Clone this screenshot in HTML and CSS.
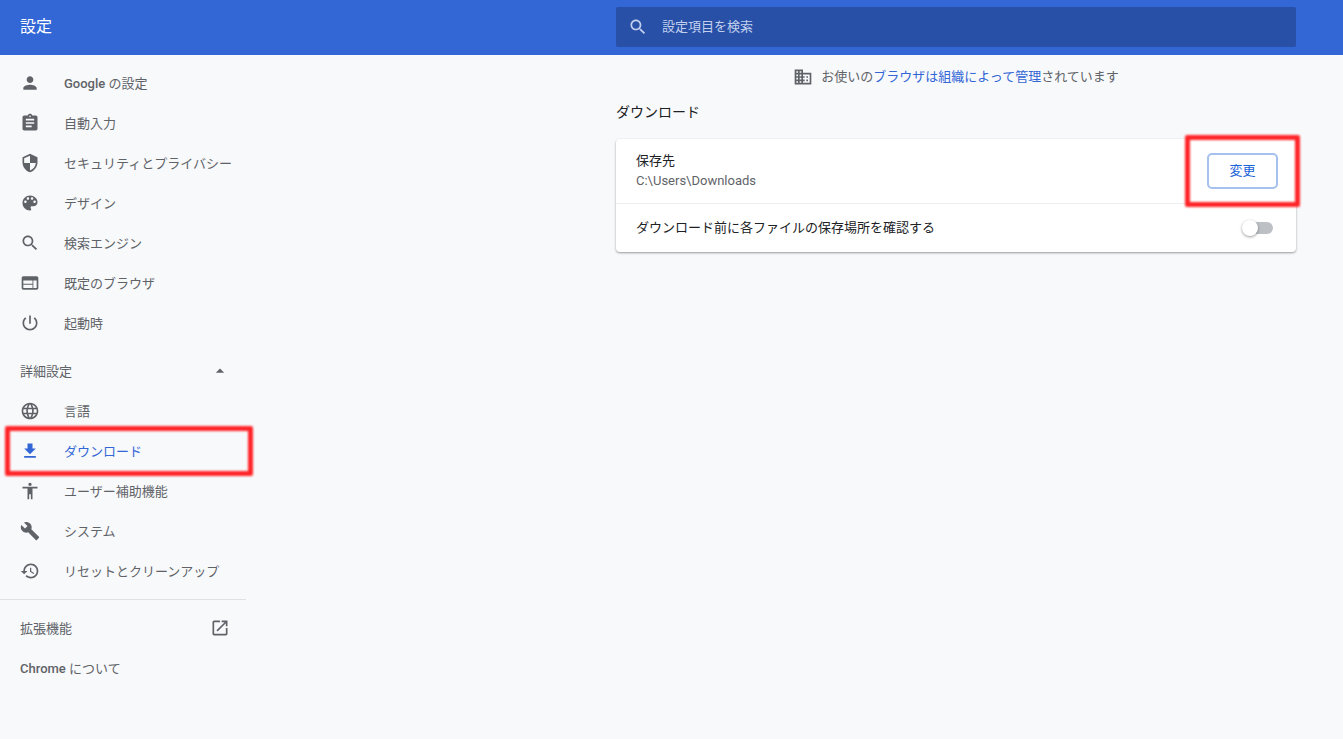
FILE: index.html
```html
<!DOCTYPE html>
<html lang="ja">
<head>
<meta charset="utf-8">
<title>設定</title>
<link rel="stylesheet" href="styles.css">
</head>
<body>
<header class="toolbar">
  <h1 class="toolbar-title">設定</h1>
  <label class="search">
    <svg class="icon" viewBox="0 0 24 24" aria-hidden="true"><path d="M15.5 14h-.79l-.28-.27C15.41 12.59 16 11.11 16 9.5 16 5.91 13.09 3 9.5 3S3 5.91 3 9.5 5.91 16 9.5 16c1.61 0 3.09-.59 4.23-1.57l.27.28v.79l5 4.99L20.49 19l-4.99-5zm-6 0C7.01 14 5 11.99 5 9.5S7.01 5 9.5 5 14 7.01 14 9.5 11.99 14 9.5 14z"/></svg>
    <input class="search-input" type="text" placeholder="設定項目を検索" aria-label="設定項目を検索">
  </label>
</header>
<div class="layout">
  <nav class="sidebar">
    <div class="group">
      <a class="item" href="#"><svg class="icon" viewBox="0 0 24 24"><path d="M12 12c2.21 0 4-1.79 4-4s-1.79-4-4-4-4 1.79-4 4 1.79 4 4 4zm0 2c-2.67 0-8 1.34-8 4v2h16v-2c0-2.66-5.33-4-8-4z"/></svg><span><span class="latin">Google</span> の設定</span></a>
      <a class="item" href="#"><svg class="icon" viewBox="0 0 24 24"><path d="M19 3h-4.18C14.4 1.84 13.3 1 12 1c-1.3 0-2.4.84-2.82 2H5c-1.1 0-2 .9-2 2v14c0 1.1.9 2 2 2h14c1.1 0 2-.9 2-2V5c0-1.1-.9-2-2-2zm-7 0c.55 0 1 .45 1 1s-.45 1-1 1-1-.45-1-1 .45-1 1-1zm2 14H7v-2h7v2zm3-4H7v-2h10v2zm0-4H7V7h10v2z"/></svg><span>自動入力</span></a>
      <a class="item" href="#"><svg class="icon" viewBox="0 0 24 24"><path d="M12 1L3 5v6c0 5.55 3.84 10.74 9 12 5.16-1.26 9-6.45 9-12V5l-9-4zm0 10.99h7c-.53 4.12-3.28 7.79-7 8.94V12H5V6.3l7-3.11v8.8z"/></svg><span>セキュリティとプライバシー</span></a>
      <a class="item" href="#"><svg class="icon" viewBox="0 0 24 24"><path d="M12 3c-4.97 0-9 4.03-9 9s4.03 9 9 9c.83 0 1.5-.67 1.5-1.5 0-.39-.15-.74-.39-1.01-.23-.26-.38-.61-.38-.99 0-.83.67-1.5 1.5-1.5H16c2.76 0 5-2.24 5-5 0-4.42-4.03-8-9-8zm-5.5 9c-.83 0-1.5-.67-1.5-1.5S5.67 9 6.5 9 8 9.67 8 10.5 7.33 12 6.5 12zm3-4C8.67 8 8 7.33 8 6.5S8.67 5 9.5 5s1.5.67 1.5 1.5S10.33 8 9.5 8zm5 0c-.83 0-1.5-.67-1.5-1.5S13.67 5 14.5 5s1.5.67 1.5 1.5S15.33 8 14.5 8zm3 4c-.83 0-1.5-.67-1.5-1.5S16.67 9 17.5 9s1.5.67 1.5 1.5-.67 1.5-1.5 1.5z"/></svg><span>デザイン</span></a>
      <a class="item" href="#"><svg class="icon" viewBox="0 0 24 24"><path d="M15.5 14h-.79l-.28-.27C15.41 12.59 16 11.11 16 9.5 16 5.91 13.09 3 9.5 3S3 5.91 3 9.5 5.91 16 9.5 16c1.61 0 3.09-.59 4.23-1.57l.27.28v.79l5 4.99L20.49 19l-4.99-5zm-6 0C7.01 14 5 11.99 5 9.5S7.01 5 9.5 5 14 7.01 14 9.5 11.99 14 9.5 14z"/></svg><span>検索エンジン</span></a>
      <a class="item" href="#"><svg class="icon" viewBox="0 0 24 24"><path d="M20 4H4c-1.1 0-1.99.9-1.99 2L2 18c0 1.1.9 2 2 2h16c1.1 0 2-.9 2-2V6c0-1.1-.9-2-2-2zm-5 14H4v-4h11v4zm0-5H4V9h11v4zm5 5h-4V9h4v9z"/></svg><span>既定のブラウザ</span></a>
      <a class="item" href="#"><svg class="icon" viewBox="0 0 24 24"><path d="M13 3h-2v10h2V3zm4.83 2.17l-1.42 1.42C17.99 7.86 19 9.81 19 12c0 3.87-3.13 7-7 7s-7-3.13-7-7c0-2.19 1.01-4.14 2.58-5.42L6.17 5.17C4.23 6.82 3 9.26 3 12c0 4.97 4.03 9 9 9s9-4.03 9-9c0-2.74-1.23-5.18-3.17-6.83z"/></svg><span>起動時</span></a>
    </div>
    <button class="item advanced" type="button" aria-expanded="true"><span>詳細設定</span><svg class="icon" viewBox="0 0 24 24"><path d="M7 14l5-5 5 5z"/></svg></button>
    <div class="group-advanced">
      <a class="item" href="#"><svg class="icon" viewBox="0 0 24 24"><path d="M11.99 2C6.47 2 2 6.48 2 12s4.47 10 9.99 10C17.52 22 22 17.52 22 12S17.52 2 11.99 2zm6.93 6h-2.95c-.32-1.25-.78-2.45-1.38-3.56 1.84.63 3.37 1.91 4.33 3.56zM12 4.04c.83 1.2 1.48 2.53 1.91 3.96h-3.82c.43-1.43 1.08-2.76 1.91-3.96zM4.26 14C4.1 13.36 4 12.69 4 12s.1-1.36.26-2h3.38c-.08.66-.14 1.32-.14 2s.06 1.34.14 2H4.26zm.82 2h2.95c.32 1.25.78 2.45 1.38 3.56-1.84-.63-3.37-1.9-4.33-3.56zm2.95-8H5.08c.96-1.66 2.49-2.93 4.33-3.56C8.81 5.55 8.35 6.75 8.03 8zM12 19.96c-.83-1.2-1.48-2.53-1.91-3.96h3.82c-.43 1.43-1.08 2.76-1.91 3.96zM14.34 14H9.66c-.09-.66-.16-1.32-.16-2s.07-1.35.16-2h4.68c.09.65.16 1.32.16 2s-.07 1.34-.16 2zm.25 5.56c.6-1.11 1.06-2.31 1.38-3.56h2.95c-.96 1.65-2.49 2.93-4.33 3.56zM16.36 14c.08-.66.14-1.32.14-2s-.06-1.34-.14-2h3.38c.16.64.26 1.31.26 2s-.1 1.36-.26 2h-3.38z"/></svg><span>言語</span></a>
      <a class="item selected" href="#" aria-current="page"><svg class="icon" viewBox="0 0 24 24"><path d="M19 9h-4V3H9v6H5l7 7 7-7zM5 18v2h14v-2H5z"/></svg><span>ダウンロード</span></a>
      <a class="item" href="#"><svg class="icon" viewBox="0 0 24 24"><path d="M12 2c1.1 0 2 .9 2 2s-.9 2-2 2-2-.9-2-2 .9-2 2-2zm9 7h-6v13h-2v-6h-2v6H9V9H3V7h18v2z"/></svg><span>ユーザー補助機能</span></a>
      <a class="item" href="#"><svg class="icon" viewBox="0 0 24 24"><path d="M22.7 19l-9.1-9.1c.9-2.3.4-5-1.5-6.900-2-2-5-2.400-7.400-1.300L9 6 6 9 1.600 4.700C.4 7.100.9 10.100 2.900 12.100c1.900 1.900 4.600 2.400 6.900 1.500l9.100 9.100c.4.4 1 .4 1.400 0l2.300-2.300c.5-.4.5-1.100.1-1.400z"/></svg><span>システム</span></a>
      <a class="item" href="#"><svg class="icon" viewBox="0 0 24 24"><path d="M13 3c-4.97 0-9 4.03-9 9H1l3.890 3.890.07.14L9 12H6c0-3.870 3.130-7 7-7s7 3.130 7 7-3.130 7-7 7c-1.930 0-3.680-.79-4.940-2.060l-1.420 1.420C8.270 19.990 10.510 21 13 21c4.970 0 9-4.030 9-9s-4.030-9-9-9zm-1 5v5l4.280 2.540.72-1.210-3.500-2.080V8H12z"/></svg><span>リセットとクリーンアップ</span></a>
    </div>
    <hr class="divider">
    <a class="item split" href="#"><span>拡張機能</span><svg class="icon" viewBox="0 0 24 24"><path d="M19 19H5V5h7V3H5c-1.110 0-2 .9-2 2v14c0 1.100.89 2 2 2h14c1.100 0 2-.9 2-2v-7h-2v7zM14 3v2h3.590l-9.830 9.830 1.410 1.410L19 6.410V10h2V3h-7z"/></svg></a>
    <a class="item" href="#"><span><span class="latin">Chrome</span> について</span></a>
  </nav>
  <main class="content">
    <p class="managed">
      <svg class="icon" viewBox="0 0 24 24"><path d="M12 7V3H2v18h20V7H12zM6 19H4v-2h2v2zm0-4H4v-2h2v2zm0-4H4V9h2v2zm0-4H4V5h2v2zm4 12H8v-2h2v2zm0-4H8v-2h2v2zm0-4H8V9h2v2zm0-4H8V5h2v2zm10 12h-8v-2h2v-2h-2v-2h2v-2h-2V9h8v10zm-2-8h-2v2h2v-2zm0 4h-2v2h2v-2z"/></svg>
      <span>お使いの<a class="link" href="#">ブラウザは組織によって管理</a>されています</span>
    </p>
    <h2 class="section-title">ダウンロード</h2>
    <section class="card">
      <div class="row row-location">
        <div>
          <div class="row-label">保存先</div>
          <div class="row-path">C:\Users\Downloads</div>
        </div>
        <div class="callout"><button class="change" type="button">変更</button></div>
      </div>
      <div class="row row-ask">
        <label class="row-label" for="ask">ダウンロード前に各ファイルの保存場所を確認する</label>
        <input class="toggle" type="checkbox" role="switch" id="ask">
      </div>
    </section>
  </main>
</div>
</body>
</html>
```
FILE: styles.css
```css
* {
  box-sizing: border-box;
}

body {
  margin: 0;
  min-height: 100vh;
  background: #f8f9fb;
  color: #202124;
  font: 400 13px/20px Roboto, "Noto Sans CJK JP", sans-serif;
}

.icon {
  flex: none;
  width: 20px;
  height: 20px;
  fill: currentColor;
}

.latin {
  font-weight: 500;
}

.toolbar {
  display: flex;
  align-items: center;
  justify-content: space-between;
  min-height: 55px;
  padding: 0 47px 2px 20px;
  background: #3367d6;
  color: #fff;
}

.toolbar-title {
  margin: 0;
  font-size: 16px;
  font-weight: 400;
  line-height: 24px;
}

.search {
  display: flex;
  align-items: center;
  gap: 14px;
  width: 680px;
  height: 40px;
  padding: 0 12px;
  border-radius: 2px;
  background: #2850a7;
  color: #c2d0ee;
}

.search-input {
  flex: 1;
  padding: 0;
  border: 0;
  outline: 0;
  background: none;
  color: #fff;
  font: inherit;
}

.search-input::placeholder {
  color: #c2d0ee;
  opacity: 1;
}

.layout {
  display: flex;
  justify-content: space-between;
  padding-right: 47px;
}

.sidebar {
  width: 246px;
  padding: 8px 0;
  color: #5f6368;
}

.item {
  display: flex;
  align-items: center;
  gap: 24px;
  width: 100%;
  height: 40px;
  padding: 0 16px 0 20px;
  color: inherit;
  text-decoration: none;
  white-space: nowrap;
}

.item > span {
  padding-top: 2px;
}

.advanced {
  margin-top: 8px;
  border: 0;
  background: none;
  font: inherit;
  text-align: left;
}

.advanced,
.split {
  justify-content: space-between;
}

.group .item:nth-child(3) {
  padding-right: 8px;
}

.selected {
  position: relative;
  color: #3367d6;
}

.selected::after,
.callout::after {
  content: "";
  position: absolute;
  border: 5px solid #ff2427;
  border-radius: 2px;
  filter: blur(1px);
  pointer-events: none;
}

.selected::after {
  inset: -5px -7px -5px 5px;
}

.divider {
  margin: 8px 0;
  border: 0;
  border-top: 1px solid #e0e1e4;
}

.content {
  width: 680px;
}

.managed {
  display: flex;
  align-items: center;
  justify-content: center;
  gap: 8px;
  margin: 12px 0 0;
  color: #5f6368;
}

.link {
  color: #3367d6;
  text-decoration: none;
}

.section-title {
  margin: 14px 0 16px;
  font-size: 14px;
  font-weight: 400;
  line-height: 22px;
}

.card {
  border-radius: 4px;
  background: #fff;
  box-shadow: 0 1px 2px rgba(60, 64, 67, 0.4), 0 1px 3px rgba(60, 64, 67, 0.15);
}

.row {
  display: flex;
  align-items: center;
  justify-content: space-between;
  padding: 0 20px;
}

.row-location {
  min-height: 65px;
  border-bottom: 1px solid #eceef0;
}

.row-ask {
  min-height: 48px;
}

.row-path {
  color: #5f6368;
}

.callout {
  position: relative;
}

.callout::after {
  inset: -20px -24px;
}

.change {
  display: block;
  width: 67px;
  height: 32px;
  padding: 0;
  border: 0;
  border-radius: 3px;
  background: #fff;
  box-shadow: 0 0 0 2px #a6c1ee;
  color: #1a64d8;
  font: inherit;
}

.toggle {
  position: relative;
  appearance: none;
  width: 28px;
  height: 12px;
  margin: 0 3px;
  border-radius: 6px;
  background: #bdc1c6;
}

.toggle::before {
  content: "";
  position: absolute;
  top: -2px;
  left: -3px;
  width: 16px;
  height: 16px;
  border-radius: 50%;
  background: #fff;
  box-shadow: 0 1px 3px rgba(0, 0, 0, 0.4);
}
```
